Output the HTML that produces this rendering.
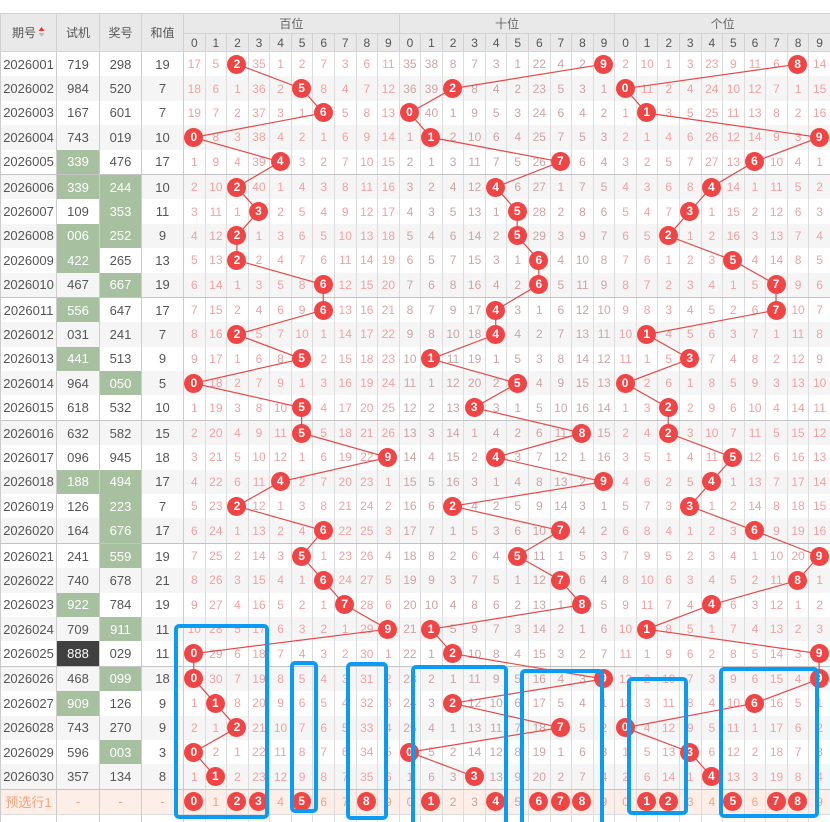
<!DOCTYPE html>
<html><head><meta charset="utf-8">
<style>
html,body{margin:0;padding:0;background:#fff;width:830px;height:822px;overflow:hidden;}
#wrap{position:relative;width:830px;padding-top:13px;}
table{border-collapse:collapse;table-layout:fixed;width:830px;font-family:"Liberation Sans","Noto Sans CJK SC",sans-serif;font-size:12px;}
th{background:#e9e9e9;color:#666;font-weight:normal;border:1px solid #d2d2d2;padding:0;text-align:center;}
thead tr.h1 th{height:19px;font-size:12px;}
thead tr.h2 th{height:17px;font-size:12px;color:#555;}
th.big{font-size:13px;color:#555;}
td{padding:0;text-align:center;border-left:1px solid #dcdcdc;border-right:1px solid #dcdcdc;height:24.4px;color:#f4a0a0;white-space:nowrap;}
tbody tr:nth-child(even) td{background:#f5f5f5;}
td:nth-child(-n+4){color:#555;font-size:13px;border-left:1px solid #ccc;border-right:1px solid #ccc;}
td:nth-child(n+15):nth-child(-n+24){color:#cfa3a3;}
td:nth-child(5),td:nth-child(15),td:nth-child(25),th.s{border-left:1px solid #bbb;}
tr.g td{border-bottom:1px solid #c4c4c4;}
td.gr{background:#a7c1a0 !important;color:#fff;}
td.dk{background:#404040 !important;color:#fff;}
b{position:relative;z-index:3;display:inline-block;width:19px;height:19px;line-height:19px;border-radius:50%;background:#f24444;color:#fff;font-weight:bold;font-size:12px;margin-left:-1px;}
tr.pre td{background:#fdeee7 !important;color:#f3a27a;border-top:1px solid #e8d0c8;}
tr.pre td:first-child{color:#f3a27a;}
tr.last td{height:10px;background:#fff !important;border-top:1px solid #ddd;}
.arr{display:inline-block;vertical-align:middle;margin-left:2px;}
#ov{position:absolute;left:0;top:0;z-index:2;pointer-events:none;}
#bx{position:absolute;left:0;top:0;z-index:4;pointer-events:none;}
</style></head><body>
<div id="wrap">
<table id="t">
<colgroup><col style="width:56px"><col style="width:43px"><col style="width:42px"><col style="width:42px">
<col span="30" style="width:21.57px"></colgroup>
<thead>
<tr class="h1"><th rowspan="2" class="big">期号<span class="arr"><svg width="7" height="12"><path d="M0.5 5L3.5 1L6.5 5Z" fill="#e33"/><path d="M0.5 7L3.5 11L6.5 7Z" fill="#bbb"/></svg></span></th><th rowspan="2" class="big">试机</th><th rowspan="2" class="big">奖号</th><th rowspan="2" class="big">和值</th><th colspan="10" class="s">百位</th><th colspan="10" class="s">十位</th><th colspan="10" class="s">个位</th></tr>
<tr class="h2"><th class="s">0</th><th>1</th><th>2</th><th>3</th><th>4</th><th>5</th><th>6</th><th>7</th><th>8</th><th>9</th><th class="s">0</th><th>1</th><th>2</th><th>3</th><th>4</th><th>5</th><th>6</th><th>7</th><th>8</th><th>9</th><th class="s">0</th><th>1</th><th>2</th><th>3</th><th>4</th><th>5</th><th>6</th><th>7</th><th>8</th><th>9</th></tr>
</thead>
<tbody>
<tr><td>2026001</td><td>719</td><td>298</td><td>19</td><td>17</td><td>5</td><td><b>2</b></td><td>35</td><td>1</td><td>2</td><td>7</td><td>3</td><td>6</td><td>11</td><td>35</td><td>38</td><td>8</td><td>7</td><td>3</td><td>1</td><td>22</td><td>4</td><td>2</td><td><b>9</b></td><td>2</td><td>10</td><td>1</td><td>3</td><td>23</td><td>9</td><td>11</td><td>6</td><td><b>8</b></td><td>14</td></tr>
<tr><td>2026002</td><td>984</td><td>520</td><td>7</td><td>18</td><td>6</td><td>1</td><td>36</td><td>2</td><td><b>5</b></td><td>8</td><td>4</td><td>7</td><td>12</td><td>36</td><td>39</td><td><b>2</b></td><td>8</td><td>4</td><td>2</td><td>23</td><td>5</td><td>3</td><td>1</td><td><b>0</b></td><td>11</td><td>2</td><td>4</td><td>24</td><td>10</td><td>12</td><td>7</td><td>1</td><td>15</td></tr>
<tr><td>2026003</td><td>167</td><td>601</td><td>7</td><td>19</td><td>7</td><td>2</td><td>37</td><td>3</td><td>1</td><td><b>6</b></td><td>5</td><td>8</td><td>13</td><td><b>0</b></td><td>40</td><td>1</td><td>9</td><td>5</td><td>3</td><td>24</td><td>6</td><td>4</td><td>2</td><td>1</td><td><b>1</b></td><td>3</td><td>5</td><td>25</td><td>11</td><td>13</td><td>8</td><td>2</td><td>16</td></tr>
<tr><td>2026004</td><td>743</td><td>019</td><td>10</td><td><b>0</b></td><td>8</td><td>3</td><td>38</td><td>4</td><td>2</td><td>1</td><td>6</td><td>9</td><td>14</td><td>1</td><td><b>1</b></td><td>2</td><td>10</td><td>6</td><td>4</td><td>25</td><td>7</td><td>5</td><td>3</td><td>2</td><td>1</td><td>4</td><td>6</td><td>26</td><td>12</td><td>14</td><td>9</td><td>3</td><td><b>9</b></td></tr>
<tr class="g"><td>2026005</td><td class="gr">339</td><td>476</td><td>17</td><td>1</td><td>9</td><td>4</td><td>39</td><td><b>4</b></td><td>3</td><td>2</td><td>7</td><td>10</td><td>15</td><td>2</td><td>1</td><td>3</td><td>11</td><td>7</td><td>5</td><td>26</td><td><b>7</b></td><td>6</td><td>4</td><td>3</td><td>2</td><td>5</td><td>7</td><td>27</td><td>13</td><td><b>6</b></td><td>10</td><td>4</td><td>1</td></tr>
<tr><td>2026006</td><td class="gr">339</td><td class="gr">244</td><td>10</td><td>2</td><td>10</td><td><b>2</b></td><td>40</td><td>1</td><td>4</td><td>3</td><td>8</td><td>11</td><td>16</td><td>3</td><td>2</td><td>4</td><td>12</td><td><b>4</b></td><td>6</td><td>27</td><td>1</td><td>7</td><td>5</td><td>4</td><td>3</td><td>6</td><td>8</td><td><b>4</b></td><td>14</td><td>1</td><td>11</td><td>5</td><td>2</td></tr>
<tr><td>2026007</td><td>109</td><td class="gr">353</td><td>11</td><td>3</td><td>11</td><td>1</td><td><b>3</b></td><td>2</td><td>5</td><td>4</td><td>9</td><td>12</td><td>17</td><td>4</td><td>3</td><td>5</td><td>13</td><td>1</td><td><b>5</b></td><td>28</td><td>2</td><td>8</td><td>6</td><td>5</td><td>4</td><td>7</td><td><b>3</b></td><td>1</td><td>15</td><td>2</td><td>12</td><td>6</td><td>3</td></tr>
<tr><td>2026008</td><td class="gr">006</td><td class="gr">252</td><td>9</td><td>4</td><td>12</td><td><b>2</b></td><td>1</td><td>3</td><td>6</td><td>5</td><td>10</td><td>13</td><td>18</td><td>5</td><td>4</td><td>6</td><td>14</td><td>2</td><td><b>5</b></td><td>29</td><td>3</td><td>9</td><td>7</td><td>6</td><td>5</td><td><b>2</b></td><td>1</td><td>2</td><td>16</td><td>3</td><td>13</td><td>7</td><td>4</td></tr>
<tr><td>2026009</td><td class="gr">422</td><td>265</td><td>13</td><td>5</td><td>13</td><td><b>2</b></td><td>2</td><td>4</td><td>7</td><td>6</td><td>11</td><td>14</td><td>19</td><td>6</td><td>5</td><td>7</td><td>15</td><td>3</td><td>1</td><td><b>6</b></td><td>4</td><td>10</td><td>8</td><td>7</td><td>6</td><td>1</td><td>2</td><td>3</td><td><b>5</b></td><td>4</td><td>14</td><td>8</td><td>5</td></tr>
<tr class="g"><td>2026010</td><td>467</td><td class="gr">667</td><td>19</td><td>6</td><td>14</td><td>1</td><td>3</td><td>5</td><td>8</td><td><b>6</b></td><td>12</td><td>15</td><td>20</td><td>7</td><td>6</td><td>8</td><td>16</td><td>4</td><td>2</td><td><b>6</b></td><td>5</td><td>11</td><td>9</td><td>8</td><td>7</td><td>2</td><td>3</td><td>4</td><td>1</td><td>5</td><td><b>7</b></td><td>9</td><td>6</td></tr>
<tr><td>2026011</td><td class="gr">556</td><td>647</td><td>17</td><td>7</td><td>15</td><td>2</td><td>4</td><td>6</td><td>9</td><td><b>6</b></td><td>13</td><td>16</td><td>21</td><td>8</td><td>7</td><td>9</td><td>17</td><td><b>4</b></td><td>3</td><td>1</td><td>6</td><td>12</td><td>10</td><td>9</td><td>8</td><td>3</td><td>4</td><td>5</td><td>2</td><td>6</td><td><b>7</b></td><td>10</td><td>7</td></tr>
<tr><td>2026012</td><td>031</td><td>241</td><td>7</td><td>8</td><td>16</td><td><b>2</b></td><td>5</td><td>7</td><td>10</td><td>1</td><td>14</td><td>17</td><td>22</td><td>9</td><td>8</td><td>10</td><td>18</td><td><b>4</b></td><td>4</td><td>2</td><td>7</td><td>13</td><td>11</td><td>10</td><td><b>1</b></td><td>4</td><td>5</td><td>6</td><td>3</td><td>7</td><td>1</td><td>11</td><td>8</td></tr>
<tr><td>2026013</td><td class="gr">441</td><td>513</td><td>9</td><td>9</td><td>17</td><td>1</td><td>6</td><td>8</td><td><b>5</b></td><td>2</td><td>15</td><td>18</td><td>23</td><td>10</td><td><b>1</b></td><td>11</td><td>19</td><td>1</td><td>5</td><td>3</td><td>8</td><td>14</td><td>12</td><td>11</td><td>1</td><td>5</td><td><b>3</b></td><td>7</td><td>4</td><td>8</td><td>2</td><td>12</td><td>9</td></tr>
<tr><td>2026014</td><td>964</td><td class="gr">050</td><td>5</td><td><b>0</b></td><td>18</td><td>2</td><td>7</td><td>9</td><td>1</td><td>3</td><td>16</td><td>19</td><td>24</td><td>11</td><td>1</td><td>12</td><td>20</td><td>2</td><td><b>5</b></td><td>4</td><td>9</td><td>15</td><td>13</td><td><b>0</b></td><td>2</td><td>6</td><td>1</td><td>8</td><td>5</td><td>9</td><td>3</td><td>13</td><td>10</td></tr>
<tr class="g"><td>2026015</td><td>618</td><td>532</td><td>10</td><td>1</td><td>19</td><td>3</td><td>8</td><td>10</td><td><b>5</b></td><td>4</td><td>17</td><td>20</td><td>25</td><td>12</td><td>2</td><td>13</td><td><b>3</b></td><td>3</td><td>1</td><td>5</td><td>10</td><td>16</td><td>14</td><td>1</td><td>3</td><td><b>2</b></td><td>2</td><td>9</td><td>6</td><td>10</td><td>4</td><td>14</td><td>11</td></tr>
<tr><td>2026016</td><td>632</td><td>582</td><td>15</td><td>2</td><td>20</td><td>4</td><td>9</td><td>11</td><td><b>5</b></td><td>5</td><td>18</td><td>21</td><td>26</td><td>13</td><td>3</td><td>14</td><td>1</td><td>4</td><td>2</td><td>6</td><td>11</td><td><b>8</b></td><td>15</td><td>2</td><td>4</td><td><b>2</b></td><td>3</td><td>10</td><td>7</td><td>11</td><td>5</td><td>15</td><td>12</td></tr>
<tr><td>2026017</td><td>096</td><td>945</td><td>18</td><td>3</td><td>21</td><td>5</td><td>10</td><td>12</td><td>1</td><td>6</td><td>19</td><td>22</td><td><b>9</b></td><td>14</td><td>4</td><td>15</td><td>2</td><td><b>4</b></td><td>3</td><td>7</td><td>12</td><td>1</td><td>16</td><td>3</td><td>5</td><td>1</td><td>4</td><td>11</td><td><b>5</b></td><td>12</td><td>6</td><td>16</td><td>13</td></tr>
<tr><td>2026018</td><td class="gr">188</td><td class="gr">494</td><td>17</td><td>4</td><td>22</td><td>6</td><td>11</td><td><b>4</b></td><td>2</td><td>7</td><td>20</td><td>23</td><td>1</td><td>15</td><td>5</td><td>16</td><td>3</td><td>1</td><td>4</td><td>8</td><td>13</td><td>2</td><td><b>9</b></td><td>4</td><td>6</td><td>2</td><td>5</td><td><b>4</b></td><td>1</td><td>13</td><td>7</td><td>17</td><td>14</td></tr>
<tr><td>2026019</td><td>126</td><td class="gr">223</td><td>7</td><td>5</td><td>23</td><td><b>2</b></td><td>12</td><td>1</td><td>3</td><td>8</td><td>21</td><td>24</td><td>2</td><td>16</td><td>6</td><td><b>2</b></td><td>4</td><td>2</td><td>5</td><td>9</td><td>14</td><td>3</td><td>1</td><td>5</td><td>7</td><td>3</td><td><b>3</b></td><td>1</td><td>2</td><td>14</td><td>8</td><td>18</td><td>15</td></tr>
<tr class="g"><td>2026020</td><td>164</td><td class="gr">676</td><td>17</td><td>6</td><td>24</td><td>1</td><td>13</td><td>2</td><td>4</td><td><b>6</b></td><td>22</td><td>25</td><td>3</td><td>17</td><td>7</td><td>1</td><td>5</td><td>3</td><td>6</td><td>10</td><td><b>7</b></td><td>4</td><td>2</td><td>6</td><td>8</td><td>4</td><td>1</td><td>2</td><td>3</td><td><b>6</b></td><td>9</td><td>19</td><td>16</td></tr>
<tr><td>2026021</td><td>241</td><td class="gr">559</td><td>19</td><td>7</td><td>25</td><td>2</td><td>14</td><td>3</td><td><b>5</b></td><td>1</td><td>23</td><td>26</td><td>4</td><td>18</td><td>8</td><td>2</td><td>6</td><td>4</td><td><b>5</b></td><td>11</td><td>1</td><td>5</td><td>3</td><td>7</td><td>9</td><td>5</td><td>2</td><td>3</td><td>4</td><td>1</td><td>10</td><td>20</td><td><b>9</b></td></tr>
<tr><td>2026022</td><td>740</td><td>678</td><td>21</td><td>8</td><td>26</td><td>3</td><td>15</td><td>4</td><td>1</td><td><b>6</b></td><td>24</td><td>27</td><td>5</td><td>19</td><td>9</td><td>3</td><td>7</td><td>5</td><td>1</td><td>12</td><td><b>7</b></td><td>6</td><td>4</td><td>8</td><td>10</td><td>6</td><td>3</td><td>4</td><td>5</td><td>2</td><td>11</td><td><b>8</b></td><td>1</td></tr>
<tr><td>2026023</td><td class="gr">922</td><td>784</td><td>19</td><td>9</td><td>27</td><td>4</td><td>16</td><td>5</td><td>2</td><td>1</td><td><b>7</b></td><td>28</td><td>6</td><td>20</td><td>10</td><td>4</td><td>8</td><td>6</td><td>2</td><td>13</td><td>1</td><td><b>8</b></td><td>5</td><td>9</td><td>11</td><td>7</td><td>4</td><td><b>4</b></td><td>6</td><td>3</td><td>12</td><td>1</td><td>2</td></tr>
<tr><td>2026024</td><td>709</td><td class="gr">911</td><td>11</td><td>10</td><td>28</td><td>5</td><td>17</td><td>6</td><td>3</td><td>2</td><td>1</td><td>29</td><td><b>9</b></td><td>21</td><td><b>1</b></td><td>5</td><td>9</td><td>7</td><td>3</td><td>14</td><td>2</td><td>1</td><td>6</td><td>10</td><td><b>1</b></td><td>8</td><td>5</td><td>1</td><td>7</td><td>4</td><td>13</td><td>2</td><td>3</td></tr>
<tr class="g"><td>2026025</td><td class="dk">888</td><td>029</td><td>11</td><td><b>0</b></td><td>29</td><td>6</td><td>18</td><td>7</td><td>4</td><td>3</td><td>2</td><td>30</td><td>1</td><td>22</td><td>1</td><td><b>2</b></td><td>10</td><td>8</td><td>4</td><td>15</td><td>3</td><td>2</td><td>7</td><td>11</td><td>1</td><td>9</td><td>6</td><td>2</td><td>8</td><td>5</td><td>14</td><td>3</td><td><b>9</b></td></tr>
<tr><td>2026026</td><td>468</td><td class="gr">099</td><td>18</td><td><b>0</b></td><td>30</td><td>7</td><td>19</td><td>8</td><td>5</td><td>4</td><td>3</td><td>31</td><td>2</td><td>23</td><td>2</td><td>1</td><td>11</td><td>9</td><td>5</td><td>16</td><td>4</td><td>3</td><td><b>9</b></td><td>12</td><td>2</td><td>10</td><td>7</td><td>3</td><td>9</td><td>6</td><td>15</td><td>4</td><td><b>9</b></td></tr>
<tr><td>2026027</td><td class="gr">909</td><td>126</td><td>9</td><td>1</td><td><b>1</b></td><td>8</td><td>20</td><td>9</td><td>6</td><td>5</td><td>4</td><td>32</td><td>3</td><td>24</td><td>3</td><td><b>2</b></td><td>12</td><td>10</td><td>6</td><td>17</td><td>5</td><td>4</td><td>1</td><td>13</td><td>3</td><td>11</td><td>8</td><td>4</td><td>10</td><td><b>6</b></td><td>16</td><td>5</td><td>1</td></tr>
<tr><td>2026028</td><td>743</td><td>270</td><td>9</td><td>2</td><td>1</td><td><b>2</b></td><td>21</td><td>10</td><td>7</td><td>6</td><td>5</td><td>33</td><td>4</td><td>25</td><td>4</td><td>1</td><td>13</td><td>11</td><td>7</td><td>18</td><td><b>7</b></td><td>5</td><td>2</td><td><b>0</b></td><td>4</td><td>12</td><td>9</td><td>5</td><td>11</td><td>1</td><td>17</td><td>6</td><td>2</td></tr>
<tr><td>2026029</td><td>596</td><td class="gr">003</td><td>3</td><td><b>0</b></td><td>2</td><td>1</td><td>22</td><td>11</td><td>8</td><td>7</td><td>6</td><td>34</td><td>5</td><td><b>0</b></td><td>5</td><td>2</td><td>14</td><td>12</td><td>8</td><td>19</td><td>1</td><td>6</td><td>3</td><td>1</td><td>5</td><td>13</td><td><b>3</b></td><td>6</td><td>12</td><td>2</td><td>18</td><td>7</td><td>3</td></tr>
<tr class="g"><td>2026030</td><td>357</td><td>134</td><td>8</td><td>1</td><td><b>1</b></td><td>2</td><td>23</td><td>12</td><td>9</td><td>8</td><td>7</td><td>35</td><td>6</td><td>1</td><td>6</td><td>3</td><td><b>3</b></td><td>13</td><td>9</td><td>20</td><td>2</td><td>7</td><td>4</td><td>2</td><td>6</td><td>14</td><td>1</td><td><b>4</b></td><td>13</td><td>3</td><td>19</td><td>8</td><td>4</td></tr>
<tr class="pre"><td>预选行1</td><td>-</td><td>-</td><td>-</td><td><b>0</b></td><td>1</td><td><b>2</b></td><td><b>3</b></td><td>4</td><td><b>5</b></td><td>6</td><td>7</td><td><b>8</b></td><td>9</td><td>0</td><td><b>1</b></td><td>2</td><td>3</td><td><b>4</b></td><td>5</td><td><b>6</b></td><td><b>7</b></td><td><b>8</b></td><td>9</td><td>0</td><td><b>1</b></td><td><b>2</b></td><td>3</td><td>4</td><td><b>5</b></td><td>6</td><td><b>7</b></td><td><b>8</b></td><td>9</td></tr>
<tr class="last"><td></td><td></td><td></td><td></td><td></td><td></td><td></td><td></td><td></td><td></td><td></td><td></td><td></td><td></td><td></td><td></td><td></td><td></td><td></td><td></td><td></td><td></td><td></td><td></td><td></td><td></td><td></td><td></td><td></td><td></td><td></td><td></td><td></td><td></td></tr>
</tbody>
</table>
<svg id="ov" width="830" height="822"></svg>
<svg id="bx" width="830" height="822" fill="none" stroke="#0a9cf5" stroke-width="4">
<rect x="176" y="626" width="91" height="191" rx="3"/>
<rect x="292" y="663" width="24" height="148" rx="3"/>
<rect x="348" y="664" width="38" height="154" rx="3"/>
<rect x="413" y="667" width="93" height="160" rx="3"/>
<rect x="522" y="671" width="80" height="160" rx="3"/>
<rect x="629" y="679" width="57" height="134" rx="3"/>
<rect x="721" y="669" width="96" height="147" rx="3"/>
</svg>
</div>
<script>
(function(){
var ov=document.getElementById('ov'),w=document.getElementById('wrap').getBoundingClientRect();
var rows=document.querySelectorAll('#t tbody tr:not(.pre):not(.last)');
var secs=[[4,14],[14,24],[24,34]];
secs.forEach(function(s){
 var pts=[];
 rows.forEach(function(tr){
  for(var i=s[0];i<s[1];i++){var c=tr.children[i];var b=c.querySelector('b');
   if(b){var r=b.getBoundingClientRect();pts.push((r.left+r.width/2-w.left).toFixed(1)+','+(r.top+r.height/2-w.top).toFixed(1));break;}}
 });
 var p=document.createElementNS('http://www.w3.org/2000/svg','polyline');
 p.setAttribute('points',pts.join(' '));p.setAttribute('fill','none');p.setAttribute('stroke','#e84848');p.setAttribute('stroke-width','1.2');
 ov.appendChild(p);
});
})();
</script>
</body></html>
